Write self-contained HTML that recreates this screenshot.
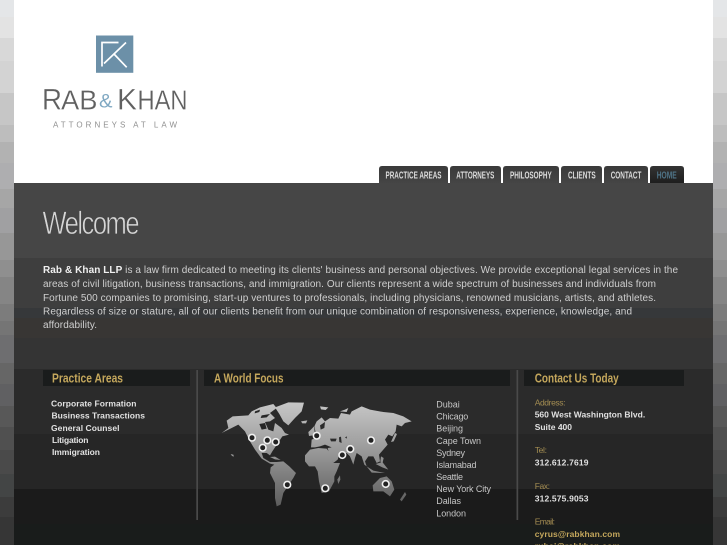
<!DOCTYPE html>
<html><head><meta charset="utf-8"><title>Rab &amp; Khan LLP</title>
<style>
html,body{margin:0;padding:0;width:727px;height:545px;overflow:hidden;background:#888}
svg{position:absolute;left:0;top:0;display:block;filter:blur(.25px)}
text{font-family:"Liberation Sans",Arial,sans-serif}
.w{font-size:10px;fill:#cfcfcf}
.l{font-size:8.5px;font-weight:bold;fill:#e2e2e2}
.c{font-size:9px;fill:#c6c6c6}
.a{font-size:8.5px;fill:#a48d52}
.d{font-size:8.5px;font-weight:bold;fill:#e0e0e0}
.n{font-size:10px;font-weight:bold;fill:#dcdcdc}
.h{font-size:13px;font-weight:bold;fill:#c4a75c}
</style></head>
<body>
<div style="position:absolute;left:0;top:0;width:727px;height:545px;background:linear-gradient(to bottom,#e4e6e8 0,#e4e6e8 17px,#e3e3e3 17px,#e3e3e3 38px,#d8d8d8 38px,#d8d8d8 61px,#d3d3d3 61px,#d3d3d3 93px,#c6c6c6 93px,#c6c6c6 125px,#bdbdbd 125px,#bdbdbd 142px,#b2b2b2 142px,#b2b2b2 163px,#aeaeb0 163px,#aeaeb0 189px,#a6a6a6 189px,#a6a6a6 208px,#a0a0a2 208px,#a0a0a2 233px,#979797 233px,#979797 260px,#8f8f8f 260px,#8f8f8f 277px,#858585 277px,#858585 304px,#7c7c7c 304px,#7c7c7c 321px,#757575 321px,#757575 335px,#6e6e70 335px,#6e6e70 363px,#666 363px,#666 384px,#606062 384px,#606062 406px,#585858 406px,#585858 427px,#505050 427px,#505050 450px,#4a4a4a 450px,#4a4a4a 474px,#434545 474px,#434545 497px,#3c3c3c 497px,#3c3c3c 517px,#363636 517px)"></div>
<div style="position:absolute;left:14px;top:0;width:699px;height:183px;background:#fff"></div>
<div style="position:absolute;left:14px;top:183px;width:699px;height:362px;background:linear-gradient(to bottom,#464646 0,#464646 75px,#3e3e3e 75px,#3e3e3e 125px,#36383a 125px,#36383a 135px,#383634 135px,#383634 155px,#343434 155px,#343434 186px,#2b2b2b 186px,#2b2b2b 251px,#262626 251px,#262626 306px,#1b1b1b 306px,#1b1b1b 341px,#191c1b 341px)"></div>

<svg width="727" height="545" viewBox="0 0 727 545" xmlns="http://www.w3.org/2000/svg">
<defs>
<linearGradient id="m" gradientUnits="userSpaceOnUse" x1="0" y1="10" x2="0" y2="330"><stop offset="0" stop-color="#c8c8c8"/><stop offset=".5" stop-color="#959595"/><stop offset="1" stop-color="#5a5a5a"/></linearGradient>
<linearGradient id="t" x1="0" y1="0" x2="0" y2="1"><stop offset="0" stop-color="#3a3a3a"/><stop offset="1" stop-color="#454545"/></linearGradient>
<linearGradient id="t2" x1="0" y1="0" x2="0" y2="1"><stop offset="0" stop-color="#333"/><stop offset="1" stop-color="#1e1e1e"/></linearGradient>
</defs>

<!-- logo -->
<rect x="96" y="35.5" width="37.3" height="37.3" fill="#6c90a8"/>
<path d="M118.5 42.5H102V66.5M126 42.5L104 63.5M114 54L126.7 67.3" fill="none" stroke="#fff" stroke-width="1.7"/>
<g stroke="#fff" stroke-width=".3" fill="#606060">
<text x="42" y="109.5" font-size="30" textLength="20" lengthAdjust="spacingAndGlyphs">R</text>
<text x="61" y="109.5" font-size="28" textLength="36.5" lengthAdjust="spacingAndGlyphs">AB</text>
<text x="117" y="109.5" font-size="30" textLength="20" lengthAdjust="spacingAndGlyphs">K</text>
<text x="137.5" y="109.5" font-size="28" textLength="50" lengthAdjust="spacingAndGlyphs">HAN</text>
</g>
<text x="99" y="107.3" font-size="19" fill="#7fa8c2" textLength="13.5" lengthAdjust="spacingAndGlyphs">&amp;</text>
<text x="53" y="127.7" font-size="8" fill="#909090" textLength="124">ATTORNEYS AT LAW</text>

<!-- nav -->
<g fill="url(#t)">
<path d="M379 183V169q0-3 3-3h63q3 0 3 3v14z"/>
<path d="M450 183V169q0-3 3-3h45q3 0 3 3v14z"/>
<path d="M503 183V169q0-3 3-3h50q3 0 3 3v14z"/>
<path d="M561 183V169q0-3 3-3h35q3 0 3 3v14z"/>
<path d="M604 183V169q0-3 3-3h38q3 0 3 3v14z"/>
</g>
<path d="M650 183V169q0-3 3-3h28q3 0 3 3v14z" fill="url(#t2)"/>
<text class="n" x="385.5" y="178.3" textLength="56" lengthAdjust="spacingAndGlyphs">PRACTICE AREAS</text>
<text class="n" x="456.3" y="178.3" textLength="38" lengthAdjust="spacingAndGlyphs">ATTORNEYS</text>
<text class="n" x="510" y="178.3" textLength="41.7" lengthAdjust="spacingAndGlyphs">PHILOSOPHY</text>
<text class="n" x="568" y="178.3" textLength="27.7" lengthAdjust="spacingAndGlyphs">CLIENTS</text>
<text class="n" x="610.7" y="178.3" textLength="30.7" lengthAdjust="spacingAndGlyphs">CONTACT</text>
<text class="n" style="fill:#4f7488" x="656.7" y="178.3" textLength="20" lengthAdjust="spacingAndGlyphs">HOME</text>

<!-- welcome -->
<text transform="translate(42.5 234) scale(.8 1)" font-size="32" letter-spacing="-1.9" fill="#d6d6d6" stroke="#464646" stroke-width=".65">Welcome</text>

<text class="w" x="43" y="273" textLength="635"><tspan fill="#f0f0f0" font-weight="bold">Rab &amp; Khan LLP</tspan> is a law firm dedicated to meeting its clients' business and personal objectives. We provide exceptional legal services in the</text>
<text class="w" x="43" y="287" textLength="613">areas of civil litigation, business transactions, and immigration. Our clients represent a wide spectrum of businesses and individuals from</text>
<text class="w" x="43" y="301" textLength="613">Fortune 500 companies to promising, start-up ventures to professionals, including physicians, renowned musicians, artists, and athletes.</text>
<text class="w" x="43" y="314.5" textLength="589">Regardless of size or stature, all of our clients benefit from our unique combination of responsiveness, experience, knowledge, and</text>
<text class="w" x="43" y="328" textLength="54">affordability.</text>

<!-- bars -->
<rect x="43" y="370" width="147" height="16" fill="#1a1c1c"/>
<rect x="204" y="370" width="306" height="16" fill="#1a1c1c"/>
<rect x="524" y="370" width="160" height="16" fill="#1a1c1c"/>
<rect x="196.3" y="370" width="1.7" height="150" fill="#4a4a4a"/>
<rect x="516.5" y="370" width="1.7" height="150" fill="#4a4a4a"/>
<text class="h" x="52" y="382.5" textLength="71" lengthAdjust="spacingAndGlyphs">Practice Areas</text>
<text class="h" x="214" y="382.5" textLength="69.5" lengthAdjust="spacingAndGlyphs">A World Focus</text>
<text class="h" x="534.7" y="382.5" textLength="84" lengthAdjust="spacingAndGlyphs">Contact Us Today</text>

<!-- list -->
<text class="l" x="51" y="406.7" textLength="85.5">Corporate Formation</text>
<text class="l" x="51.5" y="418.7" textLength="93.5">Business Transactions</text>
<text class="l" x="51" y="431" textLength="68.5">General Counsel</text>
<text class="l" x="52" y="443" textLength="36.5">Litigation</text>
<text class="l" x="52" y="455" textLength="48">Immigration</text>

<!-- map -->
<g transform="translate(220 398) scale(.3333)" fill="url(#m)">
<path d="M5,105L25,90L20,68L38,55L85,52L95,40L120,28L160,18L170,30L150,45L165,60L150,70L135,72L145,95L160,100L165,75L185,90L195,105L207,110L187,115L177,130L167,145L157,160L150,172L140,165L125,165L130,180L150,192L170,192L190,190L208,205L228,225L220,240L205,262L190,285L182,320L170,325L165,300L165,255L150,225L152,208L163,200L150,197L125,182L105,155L90,130L75,100L55,80L35,90Z"/>
<path d="M165,28L205,13L252,14L245,40L225,60L205,82L190,70L178,48Z"/>
<path d="M150,177L165,176L182,186L165,184Z"/>
<path d="M243,70L262,67L258,76L247,76Z"/>
<path d="M32,168L40,170L42,176L36,174Z"/>
<path d="M268,100L282,85L285,110L270,112Z"/>
</g>
<g fill="#262626" transform="translate(220 398) scale(.3333)">
<path d="M118,78L135,75L140,92L125,95Z"/>
<path d="M105,40L120,35L118,42L104,46Z"/>
<path d="M125,52L150,48L140,58L122,60Z"/>
</g>
<g transform="translate(305 398) scale(.3333)" fill="url(#m)">
<path d="M35,118L28,85L35,70L50,58L60,70L75,60L100,62L108,45L135,50L140,40L170,25L195,35L235,42L265,45L295,55L320,70L300,75L290,85L275,80L272,100L262,115L250,110L240,125L248,140L235,155L222,170L225,190L215,195L205,175L190,175L180,190L185,205L178,200L170,175L155,165L150,180L145,200L135,175L125,165L105,165L98,185L85,195L72,165L68,150L80,148L60,140L45,145L30,148L18,148L20,125Z"/>
<path d="M0,172L15,155L40,150L65,152L75,165L85,195L105,195L95,220L88,235L88,250L72,280L50,285L42,250L38,220L30,205L12,205L0,190Z"/>
<path d="M203,262L225,240L245,235L260,250L268,275L255,295L235,280L205,280Z"/>
<path d="M45,25L70,28L62,36L48,34Z"/>
<path d="M10,102L22,92L24,112L12,114Z"/>
<path d="M97,245L105,232L106,245L100,258Z"/>
<path d="M270,105L276,108L266,130L258,132Z"/>
<path d="M285,305L300,282L304,290L290,310Z"/>
<path d="M185,205L205,218L240,225L200,224Z"/>
<path d="M212,198L232,192L250,215L232,208Z"/>
<path d="M228,175L236,180L232,198L226,190Z"/>
<path d="M105,40L120,35L130,30L125,42Z"/>
</g>
<g fill="#2b2b2b" transform="translate(305 398) scale(.3333)">
<path d="M75,122L95,122L92,130L78,130Z"/>
<path d="M102,118L108,116L110,135L103,132Z"/>
<path d="M45,82L60,72L58,90L47,95Z"/>
<path d="M120,118L126,115L125,122Z"/>
</g>
<g fill="#222" stroke="#f0f0f0" stroke-width="1.6">
<circle cx="252" cy="437.7" r="3.3"/><circle cx="267.3" cy="440.3" r="3.3"/><circle cx="275.7" cy="442" r="3.3"/><circle cx="262.7" cy="447.7" r="3.3"/><circle cx="287.3" cy="484.7" r="3.3"/><circle cx="316.7" cy="435.7" r="3.3"/><circle cx="342.3" cy="455" r="3.3"/><circle cx="350.3" cy="449" r="3.3"/><circle cx="371" cy="440.3" r="3.3"/><circle cx="325.3" cy="488.3" r="3.3"/><circle cx="385.7" cy="484" r="3.3"/>
</g>

<!-- cities -->
<text class="c" x="436.3" y="407.5" textLength="23.4">Dubai</text>
<text class="c" x="436.3" y="419.6" textLength="32">Chicago</text>
<text class="c" x="436.3" y="431.7" textLength="26.7">Beijing</text>
<text class="c" x="436.3" y="443.8" textLength="44.7">Cape Town</text>
<text class="c" x="436.3" y="456" textLength="28.7">Sydney</text>
<text class="c" x="436.3" y="468" textLength="40.2">Islamabad</text>
<text class="c" x="436.3" y="480" textLength="26.7">Seattle</text>
<text class="c" x="436.3" y="492" textLength="54.7">New York City</text>
<text class="c" x="436.3" y="504.2" textLength="24.7">Dallas</text>
<text class="c" x="436.3" y="516.3" textLength="29.7">London</text>

<!-- contact -->
<text class="a" x="534.7" y="405.7" textLength="30.8">Address:</text>
<text class="d" x="534.7" y="417.7" textLength="110.5">560 West Washington Blvd.</text>
<text class="d" x="534.7" y="430" textLength="37.3">Suite 400</text>
<text class="a" x="534.7" y="453" textLength="12.3">Tel:</text>
<text class="d" x="534.7" y="465.7" textLength="53.8">312.612.7619</text>
<text class="a" x="534.7" y="489" textLength="15.3">Fax:</text>
<text class="d" x="534.7" y="501.5" textLength="53.8">312.575.9053</text>
<text class="a" x="534.7" y="524.7" textLength="20.3">Email:</text>
<text class="d" style="fill:#c4a75c" x="534.7" y="537" textLength="85.3">cyrus@rabkhan.com</text>
<text class="d" style="fill:#c4a75c" x="534.7" y="549.2" textLength="85.3">rubai@rabkhan.com</text>
</svg>
</body></html>
